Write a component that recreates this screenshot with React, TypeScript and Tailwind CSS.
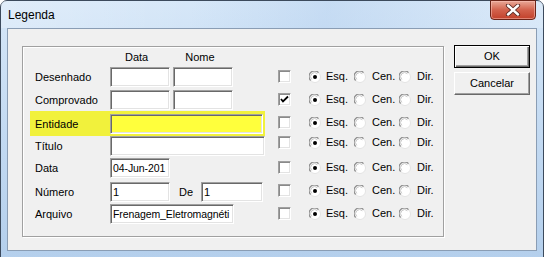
import React from 'react';

// linhas do formulário (lado esquerdo)
type Row = { label: string; mt: string; kind: 'pair' | 'wide' | 'hl' | 'date' | 'num' | 'file' };

const rows: Row[] = [
  { label: 'Desenhado', mt: 'mt-[3px]', kind: 'pair' },
  { label: 'Comprovado', mt: 'mt-[3px]', kind: 'pair' },
  { label: 'Entidade', mt: 'mt-[1px]', kind: 'hl' },
  { label: 'Título', mt: 'mt-[1px]', kind: 'wide' },
  { label: 'Data', mt: 'mt-[2px]', kind: 'date' },
  { label: 'Número', mt: 'mt-[4px]', kind: 'num' },
  { label: 'Arquivo', mt: 'mt-[2px]', kind: 'file' },
];

// posições das caixas de seleção (lado direito)
const checks = [
  { mt: 'mt-[23px]', checked: false },
  { mt: 'mt-[10px]', checked: true },
  { mt: 'mt-[10px]', checked: false },
  { mt: 'mt-[7px]', checked: false },
  { mt: 'mt-[12px]', checked: false },
  { mt: 'mt-[10px]', checked: false },
  { mt: 'mt-[10px]', checked: false },
];

const Field: React.FC<{ className: string; value?: string; yellow?: boolean; textClass?: string }> = ({
  className,
  value,
  yellow,
  textClass = 'text-[11px]',
}) => (
  <div
    className={`${className} h-[20px] overflow-hidden whitespace-nowrap border border-t-[#a0a0a0] border-l-[#a0a0a0] border-r-[#ffffff] border-b-[#ffffff] shadow-[inset_1px_1px_0_#696969,inset_-1px_-1px_0_#e3e3e3] pl-[2px] ${textClass} leading-[18px] ${yellow ? 'bg-[#ffff3c]' : 'bg-white'}`}
  >
    {value}
  </div>
);

const CheckBox: React.FC<{ checked: boolean }> = ({ checked }) => (
  <div className="w-[13px] h-[13px] bg-white border border-t-[#a0a0a0] border-l-[#a0a0a0] border-r-[#ffffff] border-b-[#ffffff] shadow-[inset_1px_1px_0_#8a8a8a,inset_-1px_-1px_0_#e3e3e3] flex items-center justify-center">
    {checked && (
      <svg width="9" height="9" viewBox="0 0 9 9">
        <path d="M1 4 L3 6.5 L8 1.5" stroke="#000" strokeWidth="1.8" fill="none" />
      </svg>
    )}
  </div>
);

const Radio: React.FC<{ on: boolean }> = ({ on }) => (
  <svg width="12" height="12" viewBox="0 0 12 12" className="shrink-0">
    <circle cx="6" cy="6" r="5.5" fill="#ffffff" stroke="#e3e3e3" />
    <path d="M1.6 9.5 A5 5 0 0 1 9.5 1.6" stroke="#8a8a8a" strokeWidth="1.2" fill="none" />
    <path d="M2.8 8.4 A3.6 3.6 0 0 1 8.4 2.8" stroke="#c8c8c8" strokeWidth="1" fill="none" />
    {on && <circle cx="6" cy="6" r="2" fill="#000" />}
  </svg>
);

const Align: React.FC = () => (
  <div className="flex items-center ml-[18px]">
    <div className="w-[45px] flex items-center gap-[5px]">
      <Radio on />
      <span>Esq.</span>
    </div>
    <div className="w-[45px] flex items-center gap-[6px]">
      <Radio on={false} />
      <span>Cen.</span>
    </div>
    <div className="flex items-center gap-[6px]">
      <Radio on={false} />
      <span>Dir.</span>
    </div>
  </div>
);

const RowFields: React.FC<{ kind: Row['kind'] }> = ({ kind }) => {
  switch (kind) {
    case 'pair':
      return (
        <div className="flex gap-[3px]">
          <Field className="w-[60px]" />
          <Field className="w-[60px]" />
        </div>
      );
    case 'hl':
      return <Field className="w-[154px] h-[19px]" yellow />;
    case 'wide':
      return <Field className="w-[155px]" />;
    case 'date':
      return <Field className="w-[60px]" value="04-Jun-201" textClass="text-[10.5px] tracking-[-0.1px]" />;
    case 'num':
      return (
        <div className="flex items-center">
          <Field className="w-[60px]" value="1" />
          <span className="ml-[9px] w-[22px]">De</span>
          <Field className="w-[62px]" value="1" />
        </div>
      );
    case 'file':
      return <Field className="w-[124px]" value="Frenagem_Eletromagnéti" textClass="text-[10.5px] tracking-[-0.1px]" />;
  }
};

const App: React.FC = () => {
  return (
    <div className="w-[544px] h-[257px] overflow-hidden font-['Liberation_Sans',Arial,sans-serif] text-black">
      <div className="w-[544px] h-[262px] rounded-t-[7px] border border-[#3c4a5c] bg-gradient-to-b from-[#d6e7f8] via-[#c3daf2] to-[#b4cfec] flex flex-col">
        {/* barra de título */}
        <div className="h-[27px] flex items-start justify-between relative bg-[linear-gradient(100deg,rgba(255,255,255,0.25)_0%,rgba(255,255,255,0)_35%,rgba(170,200,235,0.35)_60%,rgba(255,255,255,0.15)_100%)]">
          <span className="ml-[7px] mt-[7px] text-[12px] leading-[14px]">Legenda</span>
          <div className="mr-[7px] -mt-px w-[46px] h-[20px] rounded-b-[4px] border border-[#6b2418] bg-gradient-to-b from-[#e8a898] via-[#d2614c] to-[#c2402a] shadow-[inset_0_0_0_1px_rgba(255,200,190,0.5)] flex items-center justify-center">
            <svg width="16" height="12" viewBox="0 0 16 12">
              <path d="M3 1.5 L13 10.5 M13 1.5 L3 10.5" stroke="#5a2a24" strokeWidth="4.2" strokeLinecap="round" />
              <path d="M3 1.5 L13 10.5 M13 1.5 L3 10.5" stroke="#ffffff" strokeWidth="2.4" strokeLinecap="round" />
            </svg>
          </div>
        </div>

        {/* área cliente */}
        <div className="mx-[6px] h-[223px] border border-[#8a9db4] bg-[#f0f0f0] flex items-start text-[11px] leading-[13px]">
          {/* grupo */}
          <div className="ml-[14px] mt-[17px] w-[422px] h-[191px] border border-[#a0a0a0] shadow-[inset_1px_1px_0_#ffffff,1px_1px_0_#ffffff] flex">
            <div className="ml-[7px] flex flex-col">
              <div className="mt-[4px] h-[13px] flex">
                <span className="ml-[95px]">Data</span>
                <span className="ml-[37px]">Nome</span>
              </div>
              {rows.map((r) => (
                <div
                  key={r.label}
                  className={`${r.mt} flex items-center ${r.kind === 'hl' ? 'bg-[#f1f13c] pl-[5px] pr-[2px] pt-[3px] pb-[2px] -mt-[2px] mb-[-1px] w-[235px]' : 'pl-[5px]'}`}
                >
                  <span className="w-[75px]">{r.label}</span>
                  <RowFields kind={r.kind} />
                </div>
              ))}
            </div>
            <div className="ml-[13px] flex flex-col">
              {checks.map((c, i) => (
                <div key={i} className={`${c.mt} h-[13px] flex items-center`}>
                  <CheckBox checked={c.checked} />
                  <Align />
                </div>
              ))}
            </div>
          </div>

          {/* botões */}
          <div className="ml-[10px] mt-[16px] flex flex-col gap-[4px]">
            <button className="w-[76px] h-[23px] border border-black bg-[#f0f0f0] shadow-[inset_1px_1px_0_#ffffff,inset_-1px_-1px_0_#696969,inset_-2px_-2px_0_#a0a0a0] text-[11px]">
              OK
            </button>
            <button className="w-[76px] h-[23px] border border-t-white border-l-white border-r-[#696969] border-b-[#696969] bg-[#f0f0f0] shadow-[inset_-1px_-1px_0_#a0a0a0] text-[11px]">
              Cancelar
            </button>
          </div>
        </div>
      </div>
    </div>
  );
};

export default App;
